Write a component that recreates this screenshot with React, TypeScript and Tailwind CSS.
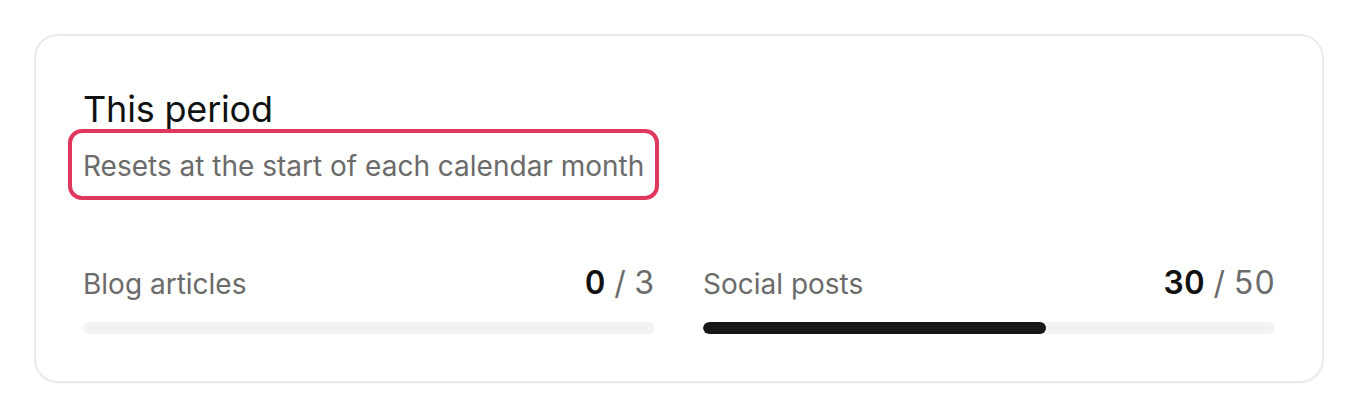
import React from 'react';

interface Usage {
  label: string;
  used: number;
  limit: number;
}

const usage: Usage[] = [
  { label: 'Blog articles', used: 0, limit: 3 },
  { label: 'Social posts', used: 30, limit: 50 },
];

const UsageRow: React.FC<{ item: Usage }> = ({ item }) => {
  const pct = item.limit > 0 ? Math.min(100, (item.used / item.limit) * 100) : 0;
  return (
    <div className="flex flex-col">
      <div className="flex justify-between items-baseline leading-[40px]">
        <span className="text-[28px] text-[#6b6b6b]">{item.label}</span>
        <span className="text-[32px] text-[#6b6b6b] tabular-nums">
          <span className="font-semibold text-[#111111]">{item.used}</span> / {item.limit}
        </span>
      </div>
      <div className="mt-[18px] h-[12px] w-full rounded-full bg-[#f3f3f3] overflow-hidden">
        <div className="h-full rounded-full bg-[#171717]" style={{ width: `${pct}%` }} />
      </div>
    </div>
  );
};

export default function App() {
  return (
    <div className="min-h-[416px] bg-white pt-[34px] px-[32px] font-['Inter',sans-serif]">
      <div className="w-[1290px] h-[349px] ml-[2px] rounded-[24px] border-2 border-[#ebebeb] bg-white px-[47px] pt-[51px] shadow-[0_1px_2px_rgba(0,0,0,0.04)]">
        <h2 className="text-[36px] leading-[44px] font-normal text-[#111111] tracking-[-0.005em]">This period</h2>
        <div className="-mt-[2px] -ml-[15px]">
          <span className="inline-block rounded-[14px] border-4 border-[#e0375f] px-[11px] pt-[13px] pb-[10px] text-[28px] leading-[40px] text-[#6b6b6b]">
            Resets at the start of each calendar month
          </span>
        </div>
        <div className="mt-[63px] grid grid-cols-2 gap-[48px]">
          {usage.map(item => (
            <UsageRow key={item.label} item={item} />
          ))}
        </div>
      </div>
    </div>
  );
}
